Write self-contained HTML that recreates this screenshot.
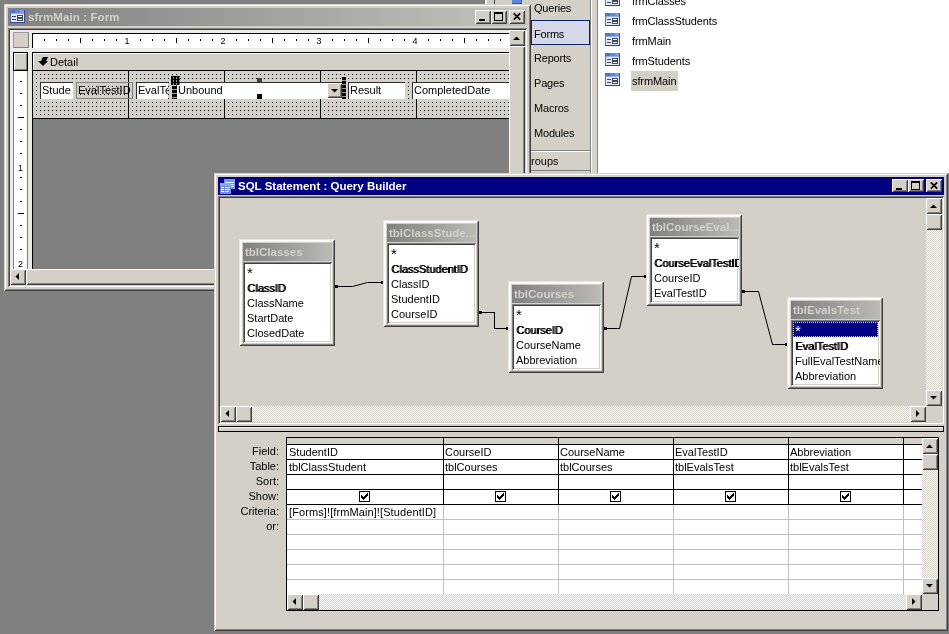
<!DOCTYPE html>
<html><head><meta charset="utf-8"><title>Query Builder</title>
<style>
html,body{margin:0;padding:0}
body{width:949px;height:634px;overflow:hidden;background:#808080;position:relative;font:11px "Liberation Sans","DejaVu Sans",sans-serif;color:#000}
body *{position:absolute;box-sizing:border-box;white-space:nowrap}
.win{background:#d4d0c8;box-shadow:inset 1px 1px 0 #d4d0c8,inset -1px -1px 0 #404040,inset 2px 2px 0 #fff,inset -2px -2px 0 #808080}
.btn{background:#d4d0c8;box-shadow:inset 1px 1px 0 #fff,inset -1px -1px 0 #404040,inset 2px 2px 0 #d4d0c8,inset -2px -2px 0 #808080}
.sunk{box-shadow:inset 1px 1px 0 #808080,inset -1px -1px 0 #fff,inset 2px 2px 0 #404040,inset -2px -2px 0 #d4d0c8}
.trk{background-color:#e9e7e3;background-image:conic-gradient(#fff 25%,#d4d0c8 0 50%,#fff 0 75%,#d4d0c8 0);background-size:2px 2px}
.ttl{color:#fff;font-weight:bold;font-size:11.5px;line-height:18px}
svg{overflow:visible}
#qc,#fc,#db,#qw,#fw{will-change:transform}
.t{line-height:15px;height:15px}
.b{text-shadow:1px 0 0 #000}
.tt{background:linear-gradient(90deg,#808080,#bcbab5);color:#d4d0c8;font-weight:bold;line-height:18px;padding-left:2px;overflow:hidden;font-size:11.5px}
.tb{box-shadow:inset 1px 1px 0 #e6e4df,inset -1px -1px 0 #404040,inset 2px 2px 0 #fff,inset -2px -2px 0 #808080,inset 3px 3px 0 #f6f5f3}
.cb{width:11px;height:11px;background:#fff;border:1px solid #000}
</style></head><body>

<!-- ================= Database window (behind) ================= -->
<div id="db" style="left:531px;top:0;width:418px;height:173px;background:#fff">
  <div style="left:0;top:0;width:60px;height:173px;background:#d4d0c8"></div>
  <div style="left:59px;top:0;width:8px;height:173px;background:#d6d3cc;border-left:1px solid #808080;border-right:1px solid #808080;box-shadow:inset 1px 0 0 #fff"></div>
  <div style="left:-1px;top:0;width:1px;height:173px;background:#404040"></div>
  <div style="left:0;top:20px;width:59px;height:25px;background:#d6d7e9;border:1px solid #0a246a"></div>
  <div class="t" style="left:3px;top:1px;letter-spacing:-0.2px">Queries</div>
  <div class="t" style="left:3px;top:27px;letter-spacing:-0.2px">Forms</div>
  <div class="t" style="left:3px;top:51px;letter-spacing:-0.2px">Reports</div>
  <div class="t" style="left:3px;top:76px;letter-spacing:-0.2px">Pages</div>
  <div class="t" style="left:3px;top:101px;letter-spacing:-0.2px">Macros</div>
  <div class="t" style="left:3px;top:126px;letter-spacing:-0.2px">Modules</div>
  <div style="left:0;top:150px;width:59px;height:1px;background:#808080"></div>
  <div style="left:0;top:151px;width:59px;height:1px;background:#fff"></div>
  <div class="t" style="left:0px;top:154px">roups</div>
  <div style="left:0;top:170px;width:59px;height:1px;background:#808080"></div>
  <div style="left:100px;top:71px;width:47px;height:20px;background:#d4d0c8"></div>
  <svg style="left:74px;top:-7px" width="15" height="13" viewBox="0 0 15 13" shape-rendering="crispEdges"><rect width="15" height="13" fill="#e2eafb"/><rect width="15" height="4" fill="#4e70d2"/><rect x="5" width="5" height="4" fill="#6285dc"/><rect x="10" width="5" height="4" fill="#7c9ce6"/><rect y="3" width="15" height="1" fill="#8fb0f0"/><rect width="1" height="13" fill="#5870bc"/><rect x="14" width="1" height="13" fill="#3a4c98"/><rect y="12" width="15" height="1" fill="#34448c"/><rect x="2" y="6" width="4" height="1" fill="#404858"/><rect x="2" y="9" width="4" height="1" fill="#404858"/><rect x="7" y="5" width="6" height="3" fill="#404858"/><rect x="8" y="6" width="4" height="1" fill="#fff"/><rect x="7" y="8" width="6" height="3" fill="#404858"/><rect x="8" y="9" width="4" height="1" fill="#fff"/></svg><svg style="left:74px;top:13px" width="15" height="13" viewBox="0 0 15 13" shape-rendering="crispEdges"><rect width="15" height="13" fill="#e2eafb"/><rect width="15" height="4" fill="#4e70d2"/><rect x="5" width="5" height="4" fill="#6285dc"/><rect x="10" width="5" height="4" fill="#7c9ce6"/><rect y="3" width="15" height="1" fill="#8fb0f0"/><rect width="1" height="13" fill="#5870bc"/><rect x="14" width="1" height="13" fill="#3a4c98"/><rect y="12" width="15" height="1" fill="#34448c"/><rect x="2" y="6" width="4" height="1" fill="#404858"/><rect x="2" y="9" width="4" height="1" fill="#404858"/><rect x="7" y="5" width="6" height="3" fill="#404858"/><rect x="8" y="6" width="4" height="1" fill="#fff"/><rect x="7" y="8" width="6" height="3" fill="#404858"/><rect x="8" y="9" width="4" height="1" fill="#fff"/></svg><svg style="left:74px;top:33px" width="15" height="13" viewBox="0 0 15 13" shape-rendering="crispEdges"><rect width="15" height="13" fill="#e2eafb"/><rect width="15" height="4" fill="#4e70d2"/><rect x="5" width="5" height="4" fill="#6285dc"/><rect x="10" width="5" height="4" fill="#7c9ce6"/><rect y="3" width="15" height="1" fill="#8fb0f0"/><rect width="1" height="13" fill="#5870bc"/><rect x="14" width="1" height="13" fill="#3a4c98"/><rect y="12" width="15" height="1" fill="#34448c"/><rect x="2" y="6" width="4" height="1" fill="#404858"/><rect x="2" y="9" width="4" height="1" fill="#404858"/><rect x="7" y="5" width="6" height="3" fill="#404858"/><rect x="8" y="6" width="4" height="1" fill="#fff"/><rect x="7" y="8" width="6" height="3" fill="#404858"/><rect x="8" y="9" width="4" height="1" fill="#fff"/></svg><svg style="left:74px;top:53px" width="15" height="13" viewBox="0 0 15 13" shape-rendering="crispEdges"><rect width="15" height="13" fill="#e2eafb"/><rect width="15" height="4" fill="#4e70d2"/><rect x="5" width="5" height="4" fill="#6285dc"/><rect x="10" width="5" height="4" fill="#7c9ce6"/><rect y="3" width="15" height="1" fill="#8fb0f0"/><rect width="1" height="13" fill="#5870bc"/><rect x="14" width="1" height="13" fill="#3a4c98"/><rect y="12" width="15" height="1" fill="#34448c"/><rect x="2" y="6" width="4" height="1" fill="#404858"/><rect x="2" y="9" width="4" height="1" fill="#404858"/><rect x="7" y="5" width="6" height="3" fill="#404858"/><rect x="8" y="6" width="4" height="1" fill="#fff"/><rect x="7" y="8" width="6" height="3" fill="#404858"/><rect x="8" y="9" width="4" height="1" fill="#fff"/></svg><svg style="left:74px;top:73px" width="15" height="13" viewBox="0 0 15 13" shape-rendering="crispEdges"><rect width="15" height="13" fill="#e2eafb"/><rect width="15" height="4" fill="#4e70d2"/><rect x="5" width="5" height="4" fill="#6285dc"/><rect x="10" width="5" height="4" fill="#7c9ce6"/><rect y="3" width="15" height="1" fill="#8fb0f0"/><rect width="1" height="13" fill="#5870bc"/><rect x="14" width="1" height="13" fill="#3a4c98"/><rect y="12" width="15" height="1" fill="#34448c"/><rect x="2" y="6" width="4" height="1" fill="#404858"/><rect x="2" y="9" width="4" height="1" fill="#404858"/><rect x="7" y="5" width="6" height="3" fill="#404858"/><rect x="8" y="6" width="4" height="1" fill="#fff"/><rect x="7" y="8" width="6" height="3" fill="#404858"/><rect x="8" y="9" width="4" height="1" fill="#fff"/></svg>
  <div class="t" style="left:101px;top:-6px;letter-spacing:-0.1px">frmClasses</div>
  <div class="t" style="left:101px;top:14px;letter-spacing:-0.1px">frmClassStudents</div>
  <div class="t" style="left:101px;top:34px;letter-spacing:-0.1px">frmMain</div>
  <div class="t" style="left:101px;top:54px;letter-spacing:-0.1px">frmStudents</div>
  <div class="t" style="left:101px;top:74px;letter-spacing:-0.1px">sfrmMain</div>
</div>

<!-- sliver of database window visible above the form window -->
<div style="left:485px;top:0;width:46px;height:4px;background:#d4d0c8"></div>
<div style="left:485px;top:0;width:2px;height:4px;background:#fff"></div>
<div style="left:494px;top:0;width:1px;height:4px;background:#404040"></div>
<div style="left:512px;top:0;width:10px;height:4px;background:#5c86e0;border-bottom:1px solid #3656b4;border-right:1px solid #3656b4"></div>

<!-- ================= Form design window (inactive) ================= -->
<div id="fw" class="win" style="left:4px;top:4px;width:527px;height:287px">
  <div style="left:4px;top:4px;width:519px;height:18px;background:linear-gradient(90deg,#808080,#c4c2bc)"></div>
  <svg style="left:6px;top:6px" width="15" height="13" viewBox="0 0 15 13" shape-rendering="crispEdges"><rect width="15" height="13" fill="#e2eafb"/><rect width="15" height="4" fill="#4e70d2"/><rect x="5" width="5" height="4" fill="#6285dc"/><rect x="10" width="5" height="4" fill="#7c9ce6"/><rect y="3" width="15" height="1" fill="#8fb0f0"/><rect width="1" height="13" fill="#5870bc"/><rect x="14" width="1" height="13" fill="#3a4c98"/><rect y="12" width="15" height="1" fill="#34448c"/><rect x="2" y="6" width="4" height="1" fill="#404858"/><rect x="2" y="9" width="4" height="1" fill="#404858"/><rect x="7" y="5" width="6" height="3" fill="#404858"/><rect x="8" y="6" width="4" height="1" fill="#fff"/><rect x="7" y="8" width="6" height="3" fill="#404858"/><rect x="8" y="9" width="4" height="1" fill="#fff"/></svg>
  <div class="ttl" style="left:24px;top:4px;color:#d4d0c8;letter-spacing:0.1px">sfrmMain : Form</div>
  <div class="btn" style="left:471px;top:6px;width:16px;height:14px"></div>
  <div class="btn" style="left:487px;top:6px;width:16px;height:14px"></div>
  <div class="btn" style="left:505px;top:6px;width:16px;height:14px"></div>
  <div style="left:475px;top:15px;width:6px;height:2px;background:#000"></div>
  <div style="left:490px;top:8px;width:9px;height:9px;border:1px solid #000;border-top-width:2px"></div>
  <svg style="left:509px;top:9px" width="8" height="7" viewBox="0 0 8 7"><path d="M0.8 0.3L7.2 6.7M7.2 0.3L0.8 6.7" stroke="#000" stroke-width="1.7" fill="none"/></svg>
</div>


<!-- form window client area (absolute page coords) -->
<div id="fc" style="left:0;top:0;width:0;height:0">
  <div class="sunk" style="left:8px;top:28px;width:519px;height:259px;background:#d4d0c8"></div>
  <!-- ruler band background -->
  <div style="left:10px;top:30px;width:499px;height:22px;background:#eeece8"></div>
  <div style="left:10px;top:52px;width:22px;height:217px;background:#eeece8"></div>
  <!-- corner selector box -->
  <div style="left:13px;top:32px;width:16px;height:16px;background:#d4d0c8;border:1px solid #808080;border-top-color:#a0a0a0;border-left-color:#a0a0a0"></div>
  <!-- horizontal ruler -->
  <div style="left:32px;top:33px;width:477px;height:15px;background:#fff;border-top:1px solid #000;border-left:1px solid #000"></div>
  <svg style="left:32px;top:33px" width="477" height="15">
    <defs><pattern id="hr" x="0" y="0" width="96" height="15" patternUnits="userSpaceOnUse">
      <rect x="12" y="6" width="1" height="2"/><rect x="24" y="6" width="1" height="2"/><rect x="36" y="6" width="1" height="2"/>
      <rect x="48" y="5" width="1" height="5"/>
      <rect x="60" y="6" width="1" height="2"/><rect x="72" y="6" width="1" height="2"/><rect x="84" y="6" width="1" height="2"/>
    </pattern></defs>
    <rect x="0" y="0" width="477" height="15" fill="url(#hr)"/>
    <g style="font-family:'Liberation Sans',sans-serif;font-size:9px" text-anchor="middle">
      <text x="95" y="11">1</text><text x="191" y="11">2</text><text x="287" y="11">3</text><text x="383" y="11">4</text>
    </g>
  </svg>
  <!-- section selector box -->
  <div style="left:13px;top:52px;width:15px;height:19px;background:#d4d0c8;border:1px solid #000;box-shadow:inset 1px 1px 0 #fff,inset -1px -1px 0 #808080"></div>
  <!-- vertical ruler -->
  <div style="left:13px;top:71px;width:15px;height:198px;background:#fff;border-left:1px solid #808080;border-right:1px solid #808080"></div>
  <svg style="left:14px;top:69px" width="14" height="200">
    <defs><pattern id="vr" x="0" y="0" width="14" height="96" patternUnits="userSpaceOnUse">
      <rect x="6" y="12" width="2" height="1"/><rect x="6" y="24" width="2" height="1"/><rect x="6" y="36" width="2" height="1"/>
      <rect x="4" y="48" width="6" height="1"/>
      <rect x="6" y="60" width="2" height="1"/><rect x="6" y="72" width="2" height="1"/><rect x="6" y="84" width="2" height="1"/>
    </pattern></defs>
    <rect x="0" y="0" width="14" height="199" fill="url(#vr)"/>
    <g style="font-family:'Liberation Sans',sans-serif;font-size:9px" text-anchor="middle">
      <text x="6.5" y="102">1</text><text x="6.5" y="198">2</text>
    </g>
  </svg>
  <!-- section header "Detail" -->
  <div style="left:32px;top:52px;width:477px;height:19px;background:#d4d0c8;border:1px solid #000;border-right:0;box-shadow:inset 1px 1px 0 #fff"></div>
  <svg style="left:38px;top:57px" width="10" height="9" viewBox="0 0 10 9"><path d="M5 0H10L8 4H10L5 9L0 4H3z" fill="#000"/></svg>
  <div class="t" style="left:50px;top:55px">Detail</div>
  <!-- vertical black line left of sections -->
  <div style="left:32px;top:71px;width:1px;height:198px;background:#000"></div>
  <!-- design surface -->
  <div style="left:33px;top:71px;width:476px;height:198px;background:#808080"></div>
  <div style="left:33px;top:71px;width:476px;height:47px;background:#d4d0c8"></div>
  <svg style="left:33px;top:71px" width="476" height="47">
    <defs><pattern id="dots" x="3" y="3" width="4" height="4" patternUnits="userSpaceOnUse"><rect x="0" y="0" width="1" height="1" fill="#000"/></pattern></defs>
    <rect x="0" y="0" width="476" height="47" fill="url(#dots)"/>
    <g fill="#d4d0c8"><rect x="94" y="0" width="3" height="47"/><rect x="190" y="0" width="3" height="47"/><rect x="286" y="0" width="3" height="47"/><rect x="382" y="0" width="3" height="47"/></g>
    <g fill="#000"><rect x="95" y="0" width="1" height="47"/><rect x="191" y="0" width="1" height="47"/><rect x="287" y="0" width="1" height="47"/><rect x="383" y="0" width="1" height="47"/></g>
  </svg>
  <div style="left:33px;top:118px;width:476px;height:1px;background:#000"></div>
  <!-- controls -->
  <div class="ctl" style="left:40px;top:82px;width:33px;height:17px;background:#fff;box-shadow:inset 1px 1px 0 #303030"><span class="t" style="left:2px;top:1px">Stude</span></div>
  <div class="ctl" style="left:76px;top:82px;width:57px;height:17px;border:1px solid #808080;overflow:hidden"><span class="t" style="left:1px;top:0px">EvalTestID</span></div>
  <div class="ctl" style="left:136px;top:82px;width:32px;height:17px;background:#fff;box-shadow:inset 1px 1px 0 #303030;overflow:hidden"><span class="t" style="left:2px;top:1px">EvalTest</span></div>
  <div class="ctl" style="left:176px;top:82px;width:168px;height:17px;background:#fff;box-shadow:inset 1px 1px 0 #303030"><span class="t" style="left:2px;top:1px">Unbound</span>
    <div class="btn" style="left:151px;top:1px;width:15px;height:15px"></div>
    <svg style="left:155px;top:7px" width="7" height="4" viewBox="0 0 7 4"><path d="M0 0h7L3.5 3.5z"/></svg>
  </div>
  <div class="ctl" style="left:348px;top:82px;width:57px;height:17px;background:#fff;box-shadow:inset 1px 1px 0 #303030"><span class="t" style="left:2px;top:1px">Result</span></div>
  <div class="ctl" style="left:412px;top:82px;width:97px;height:17px;background:#fff;box-shadow:inset 1px 1px 0 #303030"><span class="t" style="left:2px;top:1px">CompletedDate</span></div>
  <!-- selection handles -->
  <div style="left:171px;top:76px;width:9px;height:9px;background:#000;background-image:conic-gradient(#000 25%,#888 0 50%,#000 0 75%,#000 0);background-size:3px 3px"></div>
  <div style="left:172px;top:86px;width:5px;height:13px;background:repeating-linear-gradient(180deg,#000 0 3px,#999 3px 4px)"></div>
  <div style="left:257px;top:78px;width:5px;height:4px;background:#404040"></div>
  <div style="left:257px;top:94px;width:5px;height:5px;background:#000"></div>
  <div style="left:342px;top:77px;width:4px;height:22px;background:repeating-linear-gradient(180deg,#000 0 3px,#999 3px 4px)"></div>
  <!-- vertical scrollbar -->
  <div style="left:509px;top:30px;width:16px;height:239px;background:#d4d0c8"></div>
  <div class="btn" style="left:509px;top:30px;width:16px;height:16px"></div>
  <svg style="left:513px;top:36px" width="7" height="4" viewBox="0 0 7 4"><path d="M0 4h7L3.5 0.5z"/></svg>
  <div class="btn" style="left:509px;top:46px;width:16px;height:223px"></div>
  <!-- horizontal scrollbar -->
  <div style="left:10px;top:269px;width:515px;height:16px;background:#d4d0c8"></div>
  <div class="btn" style="left:10px;top:269px;width:16px;height:16px"></div>
  <svg style="left:15px;top:273px" width="4" height="7" viewBox="0 0 4 7"><path d="M4 0v7L0.5 3.5z"/></svg>
  <div class="btn" style="left:26px;top:269px;width:483px;height:16px"></div>
</div>

<!-- ================= SQL Statement : Query Builder window ================= -->
<div id="qw" class="win" style="left:214px;top:173px;width:734px;height:458px">
  <div style="left:4px;top:4px;width:726px;height:18px;background:#000080"></div>
  <svg style="left:6px;top:6px" width="15" height="15" viewBox="0 0 15 15" shape-rendering="crispEdges"><rect x="4" y="0" width="11" height="10" fill="#7c98e4"/><rect x="5" y="3" width="9" height="1" fill="#c8f0f8"/><rect x="5" y="5" width="9" height="1" fill="#c8f0f8"/><rect x="5" y="7" width="9" height="1" fill="#dfe8fb"/><rect x="0" y="4" width="11" height="11" fill="#6f8ce0"/><rect x="0" y="4" width="11" height="3" fill="#8ea8ec"/><rect x="1" y="8" width="3" height="1" fill="#fff"/><rect x="5" y="8" width="5" height="1" fill="#e6eefc"/><rect x="1" y="10" width="3" height="1" fill="#fff"/><rect x="5" y="10" width="5" height="1" fill="#e6eefc"/><rect x="1" y="12" width="3" height="1" fill="#fff"/><rect x="5" y="12" width="4" height="1" fill="#e6eefc"/></svg>
  <div class="ttl" style="left:24px;top:4px">SQL Statement : Query Builder</div>
</div>
<div id="qc" style="left:0;top:0;width:0;height:0">
  <div class="btn" style="left:892px;top:179px;width:16px;height:13px"></div>
  <div class="btn" style="left:908px;top:179px;width:16px;height:13px"></div>
  <div class="btn" style="left:926px;top:179px;width:16px;height:13px"></div>
  <div style="left:896px;top:188px;width:6px;height:2px;background:#000"></div>
  <div style="left:911px;top:181px;width:9px;height:9px;border:1px solid #000;border-top-width:2px"></div>
  <svg style="left:930px;top:182px" width="8" height="7" viewBox="0 0 8 7"><path d="M0.8 0.3L7.2 6.7M7.2 0.3L0.8 6.7" stroke="#000" stroke-width="1.7" fill="none"/></svg>
  <!-- upper pane -->
  <div class="sunk" style="left:218px;top:196px;width:726px;height:228px;background:#d4d0c8"></div>
  <!-- v scrollbar -->
  <div class="trk" style="left:926px;top:198px;width:16px;height:208px"></div>
  <div class="btn" style="left:926px;top:198px;width:16px;height:16px"></div>
  <svg style="left:930px;top:204px" width="7" height="4" viewBox="0 0 7 4"><path d="M0 4h7L3.5 0.5z"/></svg>
  <div class="btn" style="left:926px;top:214px;width:16px;height:16px"></div>
  <div class="btn" style="left:926px;top:390px;width:16px;height:16px"></div>
  <svg style="left:930px;top:396px" width="7" height="4" viewBox="0 0 7 4"><path d="M0 0h7L3.5 3.5z"/></svg>
  <!-- h scrollbar -->
  <div class="trk" style="left:220px;top:406px;width:706px;height:16px"></div>
  <div class="btn" style="left:220px;top:406px;width:16px;height:16px"></div>
  <svg style="left:225px;top:410px" width="4" height="7" viewBox="0 0 4 7"><path d="M4 0v7L0.5 3.5z"/></svg>
  <div class="btn" style="left:236px;top:406px;width:16px;height:16px"></div>
  <div class="btn" style="left:910px;top:406px;width:16px;height:16px"></div>
  <svg style="left:916px;top:410px" width="4" height="7" viewBox="0 0 4 7"><path d="M0 0v7L3.5 3.5z"/></svg>
  <div style="left:926px;top:406px;width:16px;height:16px;background:#d4d0c8"></div>
  <!-- join lines -->
  <svg style="left:0;top:0" width="949" height="634" fill="none" stroke="#000" stroke-width="1" shape-rendering="crispEdges">
    <polyline points="336.5,286.5 352.5,286.5 367.5,282.5 382.5,282.5" shape-rendering="auto"/>
    <polyline points="480.5,312.5 494.5,312.5 494.5,328.5 507.5,328.5"/>
    <polyline points="605.5,328.5 619.5,328.5 631.5,276.5 645.5,276.5" shape-rendering="auto"/>
    <polyline points="743.5,291.5 758.5,291.5 772.5,344.5 786.5,344.5" shape-rendering="auto"/>
    <g fill="#000" stroke="none">
      <rect x="335" y="285" width="3" height="3"/><rect x="381" y="281" width="3" height="3"/>
      <rect x="479" y="311" width="3" height="3"/><rect x="506" y="327" width="3" height="3"/>
      <rect x="604" y="327" width="3" height="3"/><rect x="644" y="275" width="3" height="3"/>
      <rect x="742" y="290" width="3" height="3"/><rect x="785" y="343" width="3" height="3"/>
    </g>
  </svg>
<div class="win tb" style="left:239px;top:239px;width:96px;height:107px"><div class="tt" style="left:4px;top:4px;width:89px;height:18px">tblClasses</div><div class="sunk" style="left:4px;top:23px;width:89px;height:81px;background:#fff;overflow:hidden"><div class="t" style="left:4px;top:3px;font-size:15px">*</div><div class="t b" style="left:4px;top:19px">ClassID</div><div class="t" style="left:4px;top:34px">ClassName</div><div class="t" style="left:4px;top:49px">StartDate</div><div class="t" style="left:4px;top:64px">ClosedDate</div></div></div>
<div class="win tb" style="left:383px;top:220px;width:96px;height:107px"><div class="tt" style="left:4px;top:4px;width:89px;height:18px">tblClassStude...</div><div class="sunk" style="left:4px;top:23px;width:89px;height:81px;background:#fff;overflow:hidden"><div class="t" style="left:4px;top:3px;font-size:15px">*</div><div class="t b" style="left:4px;top:19px">ClassStudentID</div><div class="t" style="left:4px;top:34px">ClassID</div><div class="t" style="left:4px;top:49px">StudentID</div><div class="t" style="left:4px;top:64px">CourseID</div></div></div>
<div class="win tb" style="left:508px;top:281px;width:96px;height:92px"><div class="tt" style="left:4px;top:4px;width:89px;height:18px">tblCourses</div><div class="sunk" style="left:4px;top:23px;width:89px;height:66px;background:#fff;overflow:hidden"><div class="t" style="left:4px;top:3px;font-size:15px">*</div><div class="t b" style="left:4px;top:19px">CourseID</div><div class="t" style="left:4px;top:34px">CourseName</div><div class="t" style="left:4px;top:49px">Abbreviation</div></div></div>
<div class="win tb" style="left:646px;top:214px;width:96px;height:92px"><div class="tt" style="left:4px;top:4px;width:89px;height:18px">tblCourseEval...</div><div class="sunk" style="left:4px;top:23px;width:89px;height:66px;background:#fff;overflow:hidden"><div class="t" style="left:4px;top:3px;font-size:15px">*</div><div class="t b" style="left:4px;top:19px">CourseEvalTestID</div><div class="t" style="left:4px;top:34px">CourseID</div><div class="t" style="left:4px;top:49px">EvalTestID</div></div></div>
<div class="win tb" style="left:787px;top:297px;width:96px;height:92px"><div class="tt" style="left:4px;top:4px;width:89px;height:18px">tblEvalsTest</div><div class="sunk" style="left:4px;top:23px;width:89px;height:66px;background:#fff;overflow:hidden"><div style="left:2px;top:2px;width:85px;height:15px;background:#000080;outline:1px dotted #d4d0c8;outline-offset:-1px"></div><div class="t" style="left:4px;top:3px;color:#fff;font-size:15px">*</div><div class="t b" style="left:4px;top:19px">EvalTestID</div><div class="t" style="left:4px;top:34px">FullEvalTestName</div><div class="t" style="left:4px;top:49px">Abbreviation</div></div></div>
  <!-- splitter -->
  <div style="left:218px;top:426px;width:726px;height:6px;background:#d4d0c8;border:1px solid #000;box-shadow:inset 0 1px 0 #fff"></div>
  <!-- QBE grid -->
  <div class="t" style="left:219px;top:444px;width:60px;text-align:right">Field:</div>
  <div class="t" style="left:219px;top:459px;width:60px;text-align:right">Table:</div>
  <div class="t" style="left:219px;top:474px;width:60px;text-align:right">Sort:</div>
  <div class="t" style="left:219px;top:489px;width:60px;text-align:right">Show:</div>
  <div class="t" style="left:219px;top:504px;width:60px;text-align:right">Criteria:</div>
  <div class="t" style="left:219px;top:519px;width:60px;text-align:right">or:</div>
  <div style="left:286px;top:437px;width:653px;height:174px;background:#fff;border:1px solid #000;border-right:1px solid #000"></div>
  <div style="left:287px;top:438px;width:635px;height:6px;background:#d4d0c8"></div>
  <svg style="left:287px;top:438px" width="635" height="156" shape-rendering="crispEdges">
    <g fill="#c0c0c0">
      <rect x="0" y="81" width="635" height="1"/><rect x="0" y="96" width="635" height="1"/><rect x="0" y="111" width="635" height="1"/><rect x="0" y="126" width="635" height="1"/><rect x="0" y="141" width="635" height="1"/>
      <rect x="156" y="67" width="1" height="89"/><rect x="271" y="67" width="1" height="89"/><rect x="386" y="67" width="1" height="89"/><rect x="501" y="67" width="1" height="89"/><rect x="616" y="67" width="1" height="89"/>
    </g>
    <g fill="#000">
      <rect x="0" y="6" width="635" height="1"/><rect x="0" y="21" width="635" height="1"/><rect x="0" y="36" width="635" height="1"/><rect x="0" y="51" width="635" height="1"/><rect x="0" y="66" width="635" height="1"/>
      <rect x="156" y="0" width="1" height="67"/><rect x="271" y="0" width="1" height="67"/><rect x="386" y="0" width="1" height="67"/><rect x="501" y="0" width="1" height="67"/><rect x="616" y="0" width="1" height="67"/>
    </g>
  </svg>
  <div class="t" style="left:289px;top:445px">StudentID</div><div class="t" style="left:289px;top:460px">tblClassStudent</div>
  <div class="cb" style="left:359px;top:491px"><svg style="left:1px;top:1px" width="9" height="9" viewBox="0 0 9 9" shape-rendering="crispEdges"><rect x="0" y="2" width="1" height="3"/><rect x="1" y="3" width="1" height="3"/><rect x="2" y="4" width="1" height="3"/><rect x="3" y="3" width="1" height="3"/><rect x="4" y="2" width="1" height="3"/><rect x="5" y="1" width="1" height="3"/><rect x="6" y="0" width="1" height="3"/></svg></div>
  <div class="t" style="left:445px;top:445px">CourseID</div><div class="t" style="left:445px;top:460px">tblCourses</div>
  <div class="cb" style="left:495px;top:491px"><svg style="left:1px;top:1px" width="9" height="9" viewBox="0 0 9 9" shape-rendering="crispEdges"><rect x="0" y="2" width="1" height="3"/><rect x="1" y="3" width="1" height="3"/><rect x="2" y="4" width="1" height="3"/><rect x="3" y="3" width="1" height="3"/><rect x="4" y="2" width="1" height="3"/><rect x="5" y="1" width="1" height="3"/><rect x="6" y="0" width="1" height="3"/></svg></div>
  <div class="t" style="left:560px;top:445px">CourseName</div><div class="t" style="left:560px;top:460px">tblCourses</div>
  <div class="cb" style="left:610px;top:491px"><svg style="left:1px;top:1px" width="9" height="9" viewBox="0 0 9 9" shape-rendering="crispEdges"><rect x="0" y="2" width="1" height="3"/><rect x="1" y="3" width="1" height="3"/><rect x="2" y="4" width="1" height="3"/><rect x="3" y="3" width="1" height="3"/><rect x="4" y="2" width="1" height="3"/><rect x="5" y="1" width="1" height="3"/><rect x="6" y="0" width="1" height="3"/></svg></div>
  <div class="t" style="left:675px;top:445px">EvalTestID</div><div class="t" style="left:675px;top:460px">tblEvalsTest</div>
  <div class="cb" style="left:725px;top:491px"><svg style="left:1px;top:1px" width="9" height="9" viewBox="0 0 9 9" shape-rendering="crispEdges"><rect x="0" y="2" width="1" height="3"/><rect x="1" y="3" width="1" height="3"/><rect x="2" y="4" width="1" height="3"/><rect x="3" y="3" width="1" height="3"/><rect x="4" y="2" width="1" height="3"/><rect x="5" y="1" width="1" height="3"/><rect x="6" y="0" width="1" height="3"/></svg></div>
  <div class="t" style="left:790px;top:445px">Abbreviation</div><div class="t" style="left:790px;top:460px">tblEvalsTest</div>
  <div class="cb" style="left:840px;top:491px"><svg style="left:1px;top:1px" width="9" height="9" viewBox="0 0 9 9" shape-rendering="crispEdges"><rect x="0" y="2" width="1" height="3"/><rect x="1" y="3" width="1" height="3"/><rect x="2" y="4" width="1" height="3"/><rect x="3" y="3" width="1" height="3"/><rect x="4" y="2" width="1" height="3"/><rect x="5" y="1" width="1" height="3"/><rect x="6" y="0" width="1" height="3"/></svg></div>
  <div class="t" style="left:289px;top:505px;letter-spacing:0.1px">[Forms]![frmMain]![StudentID]</div>
  <!-- grid v scrollbar -->
  <div class="trk" style="left:922px;top:438px;width:16px;height:156px"></div>
  <div class="btn" style="left:922px;top:438px;width:16px;height:16px"></div>
  <svg style="left:926px;top:444px" width="7" height="4" viewBox="0 0 7 4"><path d="M0 4h7L3.5 0.5z"/></svg>
  <div class="btn" style="left:922px;top:454px;width:16px;height:16px"></div>
  <div class="btn" style="left:922px;top:578px;width:16px;height:16px"></div>
  <svg style="left:926px;top:584px" width="7" height="4" viewBox="0 0 7 4"><path d="M0 0h7L3.5 3.5z"/></svg>
  <!-- grid h scrollbar -->
  <div class="trk" style="left:287px;top:594px;width:635px;height:16px"></div>
  <div class="btn" style="left:287px;top:594px;width:16px;height:16px"></div>
  <svg style="left:292px;top:598px" width="4" height="7" viewBox="0 0 4 7"><path d="M4 0v7L0.5 3.5z"/></svg>
  <div class="btn" style="left:303px;top:594px;width:16px;height:16px"></div>
  <div class="btn" style="left:906px;top:594px;width:16px;height:16px"></div>
  <svg style="left:912px;top:598px" width="4" height="7" viewBox="0 0 4 7"><path d="M0 0v7L3.5 3.5z"/></svg>
  <div style="left:922px;top:594px;width:16px;height:16px;background:#d4d0c8"></div>
</div>

</body></html>
